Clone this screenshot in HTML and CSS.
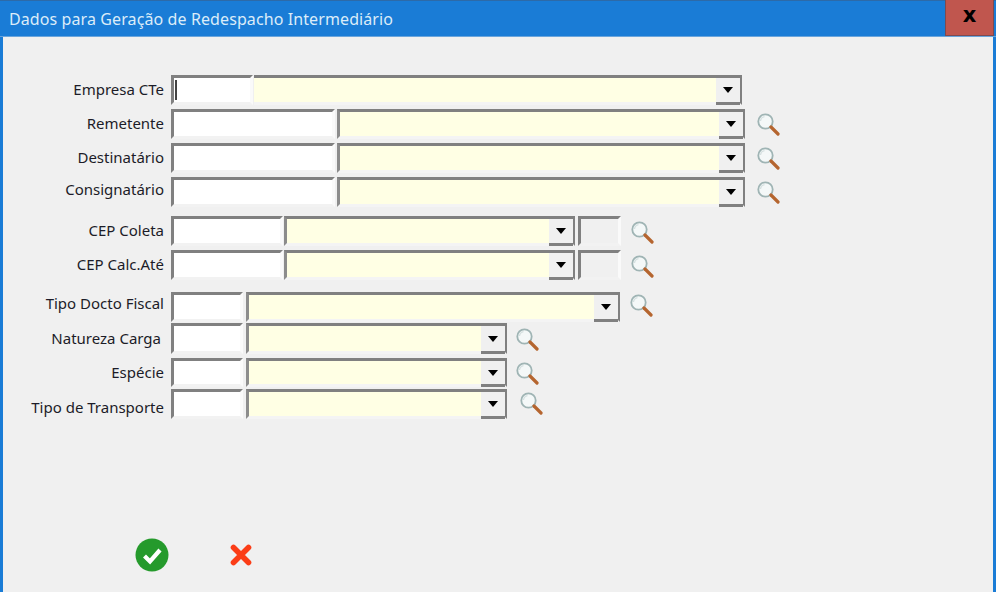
FILE: index.html
```html
<!DOCTYPE html>
<html lang="pt-BR">
<head>
  <meta charset="UTF-8">
  <title>Dados para Geração de Redespacho Intermediário</title>
  <link rel="stylesheet" href="styles.css">
</head>
<body>
  <svg width="0" height="0" class="defs">
    <defs>
      <symbol id="lupa" viewBox="0 0 24 24">
        <circle cx="9.5" cy="9.5" r="7.2" fill="#f4f8f8" stroke="#9fb4b4" stroke-width="1.8"/>
        <path d="M4.5 9a5 5 0 0 1 4-4.4" fill="none" stroke="#d5e0e0" stroke-width="1.2"/>
        <path d="M15 15l7 7" stroke="#b5652f" stroke-width="3.2" stroke-linecap="round"/>
      </symbol>
    </defs>
  </svg>

  <div class="janela">
    <header class="titulo">
      <span class="titulo-txt">Dados para Geração de Redespacho Intermediário</span>
      <button class="fechar">x</button>
    </header>

    <main class="form">
      <section class="grupo g-empresa">
        <div class="linha">
          <label class="rot sobe1">Empresa CTe</label>
          <div class="cod w82 focado"><i class="cursor"></i></div>
          <div class="combo w488 sem-borda"><span class="combo-txt"></span><span class="seta"></span></div>
        </div>
        <div class="linha">
          <label class="rot sobe1">Remetente</label>
          <div class="cod w164"></div>
          <div class="combo w408"><span class="combo-txt"></span><span class="seta"></span></div>
          <svg class="lupa"><use href="#lupa"/></svg>
        </div>
        <div class="linha">
          <label class="rot sobe1">Destinatário</label>
          <div class="cod w164"></div>
          <div class="combo w408"><span class="combo-txt"></span><span class="seta"></span></div>
          <svg class="lupa"><use href="#lupa"/></svg>
        </div>
        <div class="linha">
          <label class="rot sobe2">Consignatário</label>
          <div class="cod w164"></div>
          <div class="combo w408"><span class="combo-txt"></span><span class="seta"></span></div>
          <svg class="lupa"><use href="#lupa"/></svg>
        </div>
      </section>

      <section class="grupo g-cep">
        <div class="linha">
          <label class="rot sobe1">CEP Coleta</label>
          <div class="cod w112"></div>
          <div class="combo w291 colado"><span class="combo-txt"></span><span class="seta"></span></div>
          <div class="uf"></div>
          <svg class="lupa lupa-uf"><use href="#lupa"/></svg>
        </div>
        <div class="linha">
          <label class="rot sobe1">CEP Calc.Até</label>
          <div class="cod w112"></div>
          <div class="combo w291 colado"><span class="combo-txt"></span><span class="seta"></span></div>
          <div class="uf"></div>
          <svg class="lupa lupa-uf"><use href="#lupa"/></svg>
        </div>
      </section>

      <section class="grupo g-docto">
        <div class="linha">
          <label class="rot sobe3">Tipo Docto Fiscal</label>
          <div class="cod w72"></div>
          <div class="combo w374"><span class="combo-txt"></span><span class="seta"></span></div>
          <svg class="lupa lupa-docto"><use href="#lupa"/></svg>
        </div>
        <div class="linha alta">
          <label class="rot rot-recuo">Natureza Carga</label>
          <div class="cod w72"></div>
          <div class="combo w261"><span class="combo-txt"></span><span class="seta"></span></div>
          <svg class="lupa lupa-carga"><use href="#lupa"/></svg>
        </div>
        <div class="linha especie">
          <label class="rot sobe1">Espécie</label>
          <div class="cod w72"></div>
          <div class="combo w261"><span class="combo-txt"></span><span class="seta"></span></div>
          <svg class="lupa lupa-carga"><use href="#lupa"/></svg>
        </div>
        <div class="linha transporte">
          <label class="rot desce">Tipo de Transporte</label>
          <div class="cod w72"></div>
          <div class="combo w261"><span class="combo-txt"></span><span class="seta"></span></div>
          <svg class="lupa lupa-transp"><use href="#lupa"/></svg>
        </div>
      </section>

      <footer class="acoes">
        <button class="btn-acao" title="Confirmar">
          <svg width="34" height="34" viewBox="0 0 34 34">
            <circle cx="17" cy="17" r="16.5" fill="#259a2c"/>
            <path d="M9.5 18l5.5 5.5L25 12" fill="none" stroke="#fff" stroke-width="4.2"/>
          </svg>
        </button>
        <button class="btn-acao" title="Cancelar">
          <svg width="22" height="22" viewBox="0 0 22 22">
            <path d="M3.5 3.5l15 15M18.5 3.5l-15 15" stroke="#fb3d17" stroke-width="5.6" stroke-linecap="round"/>
          </svg>
        </button>
      </footer>
    </main>
  </div>
</body>
</html>
```

FILE: styles.css
```css
* { box-sizing: border-box; }
html, body { margin: 0; height: 100%; overflow: hidden; }
body { font-family: "Noto Sans", "Open Sans", sans-serif; font-size: 15px; color: #1c1c28; background: #f0f0f0; }
.defs { position: absolute; }

.janela { width: 996px; height: 592px; display: flex; flex-direction: column; background: #f0f0f0; border-left: 3px solid #1a7cd6; border-right: 3px solid #1a7cd6; }

.titulo { height: 37px; margin: 0 -3px; padding-left: 9px; display: flex; align-items: center; justify-content: space-between; background: #1a7cd6; border-top: 1px solid #2d6aa8; border-bottom: 1px solid #6aa5dc; color: #dcecf9; }
.titulo-txt { font-size: 16px; letter-spacing: 0.1px; }
.fechar { width: 49px; height: 36px; margin-top: -1px; margin-right: 2px; padding: 0 0 5px; background: #c0564e; border: 1px solid #7d4a50; border-top: 0; color: #000; font: bold 21px "DejaVu Sans", sans-serif; }

.form { flex: 1; display: flex; flex-direction: column; padding-top: 38px; }
.grupo { display: flex; flex-direction: column; }
.g-empresa { gap: 4px; }
.g-cep { margin-top: 9px; gap: 4px; }
.g-docto { margin-top: 12px; }

.linha { display: flex; align-items: center; height: 30px; }
.alta { margin-top: 1px; height: 31px; }
.especie { margin-top: 4px; height: 29px; }
.transporte { margin-top: 2px; }

.rot { width: 161px; text-align: right; margin-right: 7px; white-space: nowrap; }
.rot-recuo { padding-right: 3px; padding-bottom: 2px; }
.sobe1 { padding-bottom: 2px; }
.sobe2 { padding-bottom: 6px; }
.sobe3 { padding-bottom: 8px; }
.desce { padding-top: 6px; }

.cod, .combo, .uf { height: 100%; border: 3px solid; border-color: #808080 #fafafa #f2f2f2 #808080; }
.cod { background: #fff; margin-right: 2px; flex: none; }
.colado { margin-left: -1px; }
.focado { display: flex; align-items: center; padding-left: 1px; }
.cursor { width: 2px; height: 20px; background: #444; }

.w72 { width: 72px; margin-right: 3px; }
.w82 { width: 82px; margin-right: 1px; }
.w112 { width: 112px; }
.w164 { width: 164px; }
.w261 { width: 261px; }
.w291 { width: 291px; }
.w374 { width: 374px; }
.w408 { width: 408px; }
.w488 { width: 488px; }

.combo { display: flex; background: #ffffe4; flex: none; border-color: #808080 #808080 #f4f4f4 #8c8c8c; }
.sem-borda { border-left: 0; }
.combo-txt { flex: 1; }
.seta { width: 24px; margin-right: -1px; margin-bottom: -3px; display: flex; align-items: center; justify-content: center; background: #f0f0f0; border-bottom: 3px solid #808080; }
.seta::after { content: ""; border: 5px solid transparent; border-top: 6px solid #000; border-bottom: 0; }

.uf { width: 43px; margin-left: 3px; background: #f0f0f0; flex: none; }
.lupa { width: 24px; height: 24px; margin-left: 11px; flex: none; }
.lupa-uf { margin-left: 9px; margin-top: 2px; }
.lupa-docto { margin-left: 9px; margin-bottom: 4px; }
.lupa-carga { margin-left: 8px; }
.lupa-transp { margin-left: 12px; margin-bottom: 2px; }

.acoes { margin-top: auto; height: 54px; padding-left: 132px; display: flex; align-items: flex-start; gap: 61px; }
.btn-acao { padding: 0; background: none; border: 0; height: 34px; display: flex; align-items: center; }
```
